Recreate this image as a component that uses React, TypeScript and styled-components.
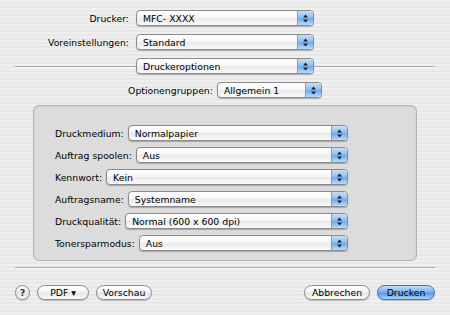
import React from 'react';
import styled, { createGlobalStyle } from 'styled-components';

const GlobalStyle = createGlobalStyle`
  html, body {
    margin: 0;
    padding: 0;
  }
  body {
    font-family: "DejaVu Sans", "Liberation Sans", sans-serif;
    font-size: 9.3px;
    color: #000;
  }
`;

const Sheet = styled('div')`
    width: 450px;
    height: 315px;
    box-sizing: border-box;
    padding: 10px 15px 0;
    display: flex;
    flex-direction: column;
    background: repeating-linear-gradient(to bottom, #efefef 0 2px, #e8e8e8 2px 4px);
`

const TopGrid = styled('div')`
    display: grid;
    grid-template-columns: 1fr 178px 1fr;
    row-gap: 8px;
    align-items: center;
`

const Label = styled('span')`
    white-space: nowrap;
    color: #000;
`

const TopLabel = styled(Label)`
    justify-self: end;
    padding-right: 7px;
`

const Rule = styled('div')`
    height: 1px;
    background: #a9a9a9;
    box-shadow: 0 1px 0 #f8f8f8;
`

const CenterRow = styled('div')`
    display: flex;
    justify-content: center;
    align-items: center;
    gap: 4px;
    margin-top: 8px;
`

const Popup = styled('div')<{ $width?: number }>`
    height: 16px;
    box-sizing: border-box;
    width: ${p => (p.$width ? `${p.$width}px` : 'auto')};
    flex: ${p => (p.$width ? '0 0 auto' : '1')};
    display: flex;
    align-items: stretch;
    border: 1px solid #8a8a8a;
    border-radius: 4px;
    background: linear-gradient(#ffffff 0%, #f7f7f7 45%, #eaeaea 55%, #fafafa 100%);
    box-shadow: 0 1px 1px rgba(0, 0, 0, 0.25);
    overflow: hidden;
`

const PopupText = styled('span')`
    flex: 1;
    padding-left: 6px;
    display: flex;
    align-items: center;
    white-space: nowrap;
`

const Stepper = styled('span')`
    width: 15px;
    display: flex;
    align-items: center;
    justify-content: center;
    border-left: 1px solid #7d9cc6;
    background: linear-gradient(#c6e0f8 0%, #93bff0 45%, #72a9ea 55%, #b8ddfc 100%);
`

const Panel = styled('div')`
    margin: 7px 18px 0;
    height: 156px;
    box-sizing: border-box;
    padding: 19px 68px 9px 21px;
    border: 1px solid #b2b2b2;
    border-radius: 6px;
    background: #dcdcdc;
    box-shadow: inset 0 1px 2px rgba(0, 0, 0, 0.08);
    display: flex;
    flex-direction: column;
    gap: 6px;
`

const OptionRow = styled('div')`
    display: flex;
    align-items: center;
    gap: 4px;
`

const Divider = styled(Rule)`
    margin-top: 6px;
`

const Footer = styled('div')`
    display: flex;
    align-items: center;
    margin-top: 17px;
    gap: 7px;
`

const Spacer = styled('div')`
    flex: 1;
`

const HelpButton = styled('span')`
    width: 15px;
    height: 15px;
    box-sizing: border-box;
    border-radius: 50%;
    border: 1px solid #8a8a8a;
    background: linear-gradient(#ffffff, #e4e4e4 55%, #f6f6f6);
    box-shadow: 0 1px 1px rgba(0, 0, 0, 0.2);
    display: flex;
    align-items: center;
    justify-content: center;
    font-weight: bold;
    font-size: 9px;
    color: #333;
`

const PushButton = styled('span')<{ $width: number; $default?: boolean }>`
    width: ${p => p.$width}px;
    height: 15px;
    box-sizing: border-box;
    border-radius: 8px;
    border: 1px solid ${p => (p.$default ? '#3f70b0' : '#8a8a8a')};
    background: ${p =>
      p.$default
        ? 'linear-gradient(#c4def8 0%, #7fb2ec 45%, #5b97e4 55%, #a9d6fb 100%)'
        : 'linear-gradient(#ffffff 0%, #f4f4f4 45%, #e6e6e6 55%, #fafafa 100%)'};
    box-shadow: 0 1px 1px rgba(0, 0, 0, 0.22);
    display: flex;
    align-items: center;
    justify-content: center;
    white-space: nowrap;
    color: #000;
`

const Arrows = () => (
  <svg width="5" height="9" viewBox="0 0 5 9">
    <polygon points="0,3.6 2.5,0.6 5,3.6" fill="#1b2430" />
    <polygon points="0,5.4 5,5.4 2.5,8.4" fill="#1b2430" />
  </svg>
)

function Select({ value, width }: { value: string; width?: number }) {
  return (
    <Popup $width={width}>
      <PopupText>{value}</PopupText>
      <Stepper>
        <Arrows />
      </Stepper>
    </Popup>
  )
}

const options = [
  ['Druckmedium:', 'Normalpapier'],
  ['Auftrag spoolen:', 'Aus'],
  ['Kennwort:', 'Kein'],
  ['Auftragsname:', 'Systemname'],
  ['Druckqualität:', 'Normal (600 x 600 dpi)'],
  ['Tonersparmodus:', 'Aus'],
]

function App() {
  return (
    <Sheet>
      <GlobalStyle />
      <TopGrid>
        <TopLabel>Drucker:</TopLabel>
        <Select value="MFC- XXXX" />
        <span />
        <TopLabel>Voreinstellungen:</TopLabel>
        <Select value="Standard" />
        <span />
        <Rule />
        <Select value="Druckeroptionen" />
        <Rule />
      </TopGrid>
      <CenterRow>
        <Label>Optionengruppen:</Label>
        <Select value="Allgemein 1" width={105} />
      </CenterRow>
      <Panel>
        {options.map(([label, value]) => (
          <OptionRow key={label}>
            <Label>{label}</Label>
            <Select value={value} />
          </OptionRow>
        ))}
      </Panel>
      <Divider />
      <Footer>
        <HelpButton>?</HelpButton>
        <PushButton $width={52}>PDF ▾</PushButton>
        <PushButton $width={56}>Vorschau</PushButton>
        <Spacer />
        <PushButton $width={66}>Abbrechen</PushButton>
        <PushButton $width={58} $default>Drucken</PushButton>
      </Footer>
    </Sheet>
  );
}
export default App;
